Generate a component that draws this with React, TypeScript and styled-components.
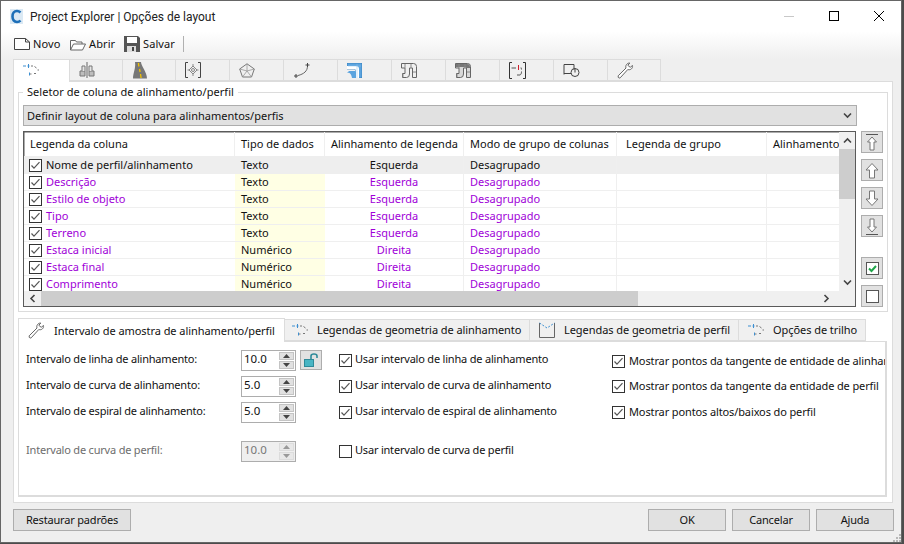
import React from "react";
import styled, { createGlobalStyle } from "styled-components";

const FONT = `"Noto Sans", Tahoma, sans-serif`;

const Global = createGlobalStyle`
  html, body { margin: 0; padding: 0; background: #4c4c4c; }
  body { width: 904px; height: 544px; overflow: hidden; font-family: ${FONT}; }
  * { box-sizing: border-box; }
`;

const Win = styled.div`
  width: 902px; height: 543px; border: 1px solid #666;
  background: #efefef; display: flex; flex-direction: column; color: #111;
  font-size: 11px; line-height: 14px; position: relative;
`;
const TitleBar = styled.div`
  height: 30px; background: #fff; display: flex; align-items: center; padding-left: 9px; flex: none;
`;
const TitleText = styled.span`
  margin-left: 7px; font-family: Roboto, sans-serif; font-size: 12px; color: #222; flex: 1; padding-top: 1px;
`;
const WinBtn = styled.div`
  width: 45px; height: 30px; display: flex; align-items: center; justify-content: center; flex: none;
`;
const WinBtns = styled.div`display: flex;`;
const Toolbar = styled.div`
  height: 28px; flex: none; display: flex; align-items: center; padding: 0 0 2px 13px;
  background: linear-gradient(#fff, #efefef);
`;
const ToolBtn = styled.div<{ $w: number }>`
  width: ${p => p.$w}px; display: flex; align-items: center; gap: 3px; font-size: 11px; letter-spacing: .1px;
`;
const ToolSep = styled.div`width: 1px; height: 16px; background: #b0b0b0;`;
const TabStrip = styled.div`
  display: flex; height: 22px; margin: 0 0 0 12px; align-items: flex-end; flex: none; position: relative; z-index: 1;
`;
const IconTab = styled.div<{ $w: number; $active?: boolean }>`
  width: ${p => p.$w}px; height: ${p => (p.$active ? 23 : 22)}px;
  background: ${p => (p.$active ? "#fff" : "#f0f0f0")};
  border: 1px solid #dcdcdc; border-left-width: ${p => (p.$active ? 1 : 0)}px;
  border-bottom-width: ${p => (p.$active ? 0 : 1)}px;
  margin-bottom: ${p => (p.$active ? -1 : 0)}px;
  display: flex; align-items: center; padding-left: 9px; padding-bottom: ${p => (p.$active ? 3 : 0)}px;
`;
const Outer = styled.div`
  width: 880px; height: 422px; margin-left: 12px; background: #fff; border: 1px solid #dcdcdc;
  padding: 10px 4px 5px 4px; display: flex; flex-direction: column; flex: none;
`;
const Group = styled.div`
  width: 870px; height: 220px; border: 1px solid #dcdcdc; position: relative; padding: 12px 4px 0 4px; flex: none;
`;
const Legend = styled.div`
  position: absolute; left: 4px; top: -8px; background: #fff; padding: 0 4px; letter-spacing: .05px;
`;
const Combo = styled.div`
  height: 21px; width: 834px; background: #e1e1e1; border: 1px solid #adadad; display: flex; align-items: center;
  justify-content: space-between; padding: 0 4px 0 3px;
`;
const TableRow = styled.div`display: flex; margin-top: 5px; align-items: flex-start;`;
const TableBox = styled.div`
  width: 834px; height: 176px; border: 1px solid #5a5a5a; display: flex; flex-direction: column; overflow: hidden;
  box-shadow: inset 0 0 0 .5px #5a5a5a;
`;
const TableTop = styled.div`flex: 1; display: flex; min-height: 0;`;
const Cols = styled.div`flex: 1; min-width: 0; overflow: hidden;`;
const GRID = "211px 90px 139px 153px 150px 90px";
const Head = styled.div`
  display: grid; grid-template-columns: ${GRID}; height: 24px; width: 833px;
`;
const HeadCell = styled.div<{ $pl?: number }>`
  border-right: 1px solid #efefef; padding: 0 0 0 ${p => p.$pl ?? 6}px; display: flex; align-items: center; white-space: nowrap; overflow: hidden;
`;
const Row = styled.div<{ $sel?: boolean }>`
  display: grid; grid-template-columns: ${GRID}; height: ${p => (p.$sel ? 18 : 17)}px; width: 833px;
  background: ${p => (p.$sel ? "#eeeeee" : "#fff")};
  border-bottom: ${p => (p.$sel ? "0" : "1px solid #efefef")};
  color: ${p => (p.$sel ? "#111" : "#a000d8")};
`;
const NameCell = styled.div`display: flex; align-items: center; padding-left: 5px; gap: 4px; white-space: nowrap;`;
const DataCell = styled.div<{ $yellow?: boolean; $center?: boolean; $sel?: boolean }>`
  display: flex; align-items: center; padding-left: 6px; color: #111; white-space: nowrap;
  justify-content: ${p => (p.$center ? "center" : "flex-start")};
  background: ${p => (p.$sel ? "#eee" : p.$yellow ? "#ffffe4" : "transparent")};
`;
const PurpleCell = styled(DataCell)<{ $on?: boolean }>`
  color: ${p => (p.$on ? "#111" : "#a000d8")}; border-right: 1px solid #efefef; padding-left: ${p => (p.$center ? 0 : 6)}px;
`;
const VScroll = styled.div`
  width: 16px; flex: none; background: #f0f0f0; display: flex; flex-direction: column; align-items: stretch;
`;
const ScrollArrow = styled.div`
  height: 17px; flex: none; display: flex; align-items: center; justify-content: center;
`;
const VTrack = styled.div`flex: 1;`;
const VThumb = styled.div`height: 50px; background: #cdcdcd;`;
const HScroll = styled.div`height: 15px; flex: none; display: flex; background: #f0f0f0;`;
const HArrow = styled.div<{ $mr?: number }>`width: 17px; flex: none; display: flex; align-items: center; justify-content: center; margin-right: ${p => p.$mr ?? 0}px;`;
const HThumb = styled.div`width: 597px; background: #cdcdcd; flex: none;`;
const HFill = styled.div`flex: 1;`;
const SideBtns = styled.div`margin-left: 5px; display: flex; flex-direction: column; width: 22px; flex: none;`;
const SideBtn = styled.div<{ $mt: number }>`
  width: 22px; height: 22px; margin-top: ${p => p.$mt}px; background: #e1e1e1; border: 1px solid #adadad;
  display: flex; align-items: center; justify-content: center; flex: none;
`;
const SubTabs = styled.div`
  display: flex; height: 24px; margin-top: 5px; align-items: flex-end; position: relative; z-index: 1; flex: none; letter-spacing: -.06px; font-size: 11px;
`;
const SubTab = styled.div<{ $w: number; $active?: boolean; $pl?: number }>`
  width: ${p => p.$w}px; height: ${p => (p.$active ? 24 : 22)}px;
  background: ${p => (p.$active ? "#fff" : "#f0f0f0")};
  border: 1px solid #dcdcdc; border-left-width: ${p => (p.$active ? 1 : 0)}px; border-bottom-width: ${p => (p.$active ? 0 : 1)}px;
  margin-bottom: ${p => (p.$active ? -1 : 0)}px;
  display: flex; align-items: center; white-space: nowrap; padding-left: ${p => p.$pl ?? 5}px; gap: 8px;
`;
const SubLabel = styled.span<{ $ml?: number }>`margin-left: ${p => p.$ml ?? 0}px;`;
const SubPanel = styled.div`
  width: 869px; height: 156px; border: 2px solid #dcdcdc; border-width: 1px 2px 2px 1px; position: relative; flex: none;
  display: grid; grid-template-columns: 313px 273px 1fr; overflow: hidden; padding: 8px 0 0 7px;
`;
const Col = styled.div<{ $pt?: number }>`display: flex; flex-direction: column; padding-top: ${p => p.$pt ?? 0}px; min-width: 0;`;
const FieldRow = styled.div<{ $mt?: number }>`
  display: flex; height: 20px; align-items: center; margin-top: ${p => p.$mt ?? 0}px; flex: none;
`;
const Label = styled.div<{ $off?: boolean }>`
  width: 215px; color: ${p => (p.$off ? "#6d6d6d" : "#111")}; white-space: nowrap; letter-spacing: -.2px; padding-bottom: 2px;
`;
const Spin = styled.div<{ $off?: boolean }>`
  width: 55px; height: 21px; border: 1px solid #adadad; background: ${p => (p.$off ? "#efefef" : "#fff")};
  display: flex; justify-content: space-between; padding: 1px; flex: none; color: ${p => (p.$off ? "#777" : "#111")};
`;
const SpinVal = styled.div`padding-left: 1px; font-size: 11.5px; line-height: 14px;`;
const SpinBtns = styled.div`display: flex; flex-direction: column; gap: 1px; width: 15px;`;
const SpinBtn = styled.div<{ $off?: boolean }>`
  flex: 1; background: ${p => (p.$off ? "#e8e8e8" : "#e1e1e1")}; display: flex; align-items: center; justify-content: center;
  border: 1px solid ${p => (p.$off ? "#dcdcdc" : "#c4c4c4")};
`;
const LockBtn = styled.div`
  width: 22px; height: 20px; margin-left: 4px; background: #e1e1e1; border: 1px solid #adadad;
  display: flex; align-items: center; justify-content: center;
`;
const CheckLine = styled.div<{ $mt?: number; $gap?: number; $ls?: number }>`
  display: flex; height: 20px; align-items: center; gap: ${p => p.$gap ?? 3}px; white-space: nowrap; margin-top: ${p => p.$mt ?? 0}px; flex: none; letter-spacing: ${p => p.$ls ?? -0.2}px;
`;
const CheckText = styled.span<{ $raise?: boolean }>`padding-bottom: ${p => (p.$raise ? 2 : 0)}px;`;
const Footer = styled.div`
  display: flex; margin: 6px 0 0 12px; width: 881px; justify-content: space-between; flex: none; letter-spacing: -.18px;
`;
const FootBtn = styled.div<{ $w: number }>`
  width: ${p => p.$w}px; height: 22px; background: #e1e1e1; border: 1px solid #adadad;
  display: flex; align-items: center; justify-content: center;
`;
const FootRight = styled.div`display: flex; gap: 6px;`;
const Grip = styled.svg`position: absolute; right: 0; bottom: 0;`;

const Check = ({ on = true }: { on?: boolean }) => (
  <svg width="13" height="13" viewBox="0 0 13 13" style={{ flex: "none" }}>
    <rect x=".5" y=".5" width="12" height="12" fill="#fff" stroke="#333" />
    {on && <path d="M2.5 6.5 5 9.2 10.5 3.2" fill="none" stroke="#555" strokeWidth="1.2" />}
  </svg>
);

const DashCurve = () => (
  <svg width="16" height="14" viewBox="0 0 16 14">
    <path d="M0 3h3M4.500 3h2" stroke="#3d8fd1" />
    <path d="M5.500 1v4" stroke="#3d8fd1" />
    <path d="M8 3h2M11.500 3.500l2 1.500M14.500 7H16M13 10.500h-2M8.500 11H6" stroke="#777" fill="none" />
    <path d="M6.500 9.500v3" stroke="#3d8fd1" />
  </svg>
);

const Ic = {
  road2: (
    <svg width="16" height="16" viewBox="0 0 16 16">
      <path d="M8 0v16" stroke="#666" />
      <path d="M1 9h5v5H1zM10 9h5v5h-5z" fill="#bdbdbd" stroke="#777" />
      <path d="M3 9V4h3v5M13 9V4h-3v5" fill="#e6e6e6" stroke="#777" />
    </svg>
  ),
  road: (
    <svg width="16" height="17" viewBox="0 0 16 17">
      <path d="M3 0h6c0 4 6 10 6 16.500H1C1 11 4 6 3 0z" fill="#777" />
      <path d="M6.500 1c0 1 0 2 .5 3.500M7.500 7l.6 3M8.500 12l.6 4" stroke="#f2c200" strokeWidth="1.300" fill="none" />
    </svg>
  ),
  target: (
    <svg width="16" height="16" viewBox="0 0 16 16">
      <path d="M3 .5H.5v15H3M13 .5h2.500v15H13" fill="none" stroke="#444" />
      <path d="M8 4l4 4-4 4-4-4z" fill="none" stroke="#888" />
      <circle cx="8" cy="8" r="1.500" fill="none" stroke="#888" />
      <path d="M8 2v2M8 12v2M2.500 8H4M12 8h1.500" stroke="#888" />
    </svg>
  ),
  surface: (
    <svg width="16" height="15" viewBox="0 0 16 15">
      <path d="M8 .8 15.300 6l-2.800 8h-9L.7 6z" fill="none" stroke="#777" />
      <path d="M.7 6 8 8l7.300-2M8 .8V8M3.500 14 8 8l4.500 6" fill="none" stroke="#999" strokeWidth=".8" />
    </svg>
  ),
  curve: (
    <svg width="17" height="17" viewBox="0 0 17 17">
      <path d="M14.500 4C14.500 9 11 12 5 13.500" fill="none" stroke="#666" />
      <path d="M12.500 3h4M14.500 1v4M1 14h4M3 12v4" stroke="#444" />
    </svg>
  ),
  blue: (
    <svg width="15" height="15" viewBox="0 0 15 15">
      <path d="M0 0h15v15H9V8q0-2-2-2H0z" fill="#5ba4df" stroke="#2f78b5" strokeWidth=".7" />
      <path d="M0 3h9q3 0 3 3v9H9V8q0-2-2-2H0z" fill="#fff" />
      <path d="M0 10q4-1 5 5h4V9q0-1-1-1H2z" fill="#5ba4df" />
      <path d="M10 1v14M1 3h13" stroke="#8ec3ea" strokeWidth=".5" />
    </svg>
  ),
  pipe: (g: boolean) => (
    <svg width="16" height="15" viewBox="0 0 16 15">
      <path d="M.5 .5h12q3 0 3 3v11h-4V5h-3v6q0 3.500-3 3.500H1.500v-4h2.500V5H.5z" fill={g ? "#d8d8d8" : "#efefef"} stroke="#666" />
      {g && <path d="M1 1h11q3 0 3 3v1h-4V4H1z" fill="#777" />}
      <path d="M4 1v4M10 1v4M12 9h3M2 11v3" stroke="#888" />
    </svg>
  ),
  bracket: (
    <svg width="17" height="17" viewBox="0 0 17 17">
      <path d="M3 .5H.5v16H3M14 .5h2.500v16H14" fill="none" stroke="#333" />
      <path d="M2.500 6H7M12 5.500l.5 2M12.500 9.500c0 2-.5 3-1.500 3.500H8" fill="none" stroke="#555" />
      <path d="M9.500 3v5" stroke="#d01c2a" />
    </svg>
  ),
  profile: (
    <svg width="17" height="13" viewBox="0 0 17 13">
      <path d="M1 10.500V.5h10v5" fill="none" stroke="#444" />
      <path d="M1 9.500h7" stroke="#444" />
      <circle cx="12" cy="8.500" r="4" fill="none" stroke="#444" />
      <path d="M12 4.500v4" stroke="#444" />
    </svg>
  ),
  wrench: (
    <svg width="17" height="17" viewBox="0 0 17 17">
      <path d="M1.200 13.800 9 6c-.8-2.300.7-5 3.800-5l-2 2.300 2.400 2L15.500 3.500c.5 2.800-2 5-4.700 4L3.200 15.800q-1.200.8-2-.5z" fill="#fff" stroke="#666" />
    </svg>
  ),
};

const Arrow = ({ d }: { d: "up" | "down" }) => (
  <svg width="14" height="17" viewBox="0 0 14 17">
    {d === "up" ? (
      <path d="M7 1.500 13 8H9.500v8h-5V8H1z" fill="#fff" stroke="#777" />
    ) : (
      <path d="M7 15.500 13 9H9.500V1h-5v8H1z" fill="#fff" stroke="#777" />
    )}
  </svg>
);
const EndArrow = ({ d }: { d: "up" | "down" }) => (
  <svg width="14" height="17" viewBox="0 0 14 17">
    {d === "up" ? (
      <>
        <path d="M1 .5h12" stroke="#555" />
        <path d="M7 3 11.500 8H9v8H5V8H2.500z" fill="#fff" stroke="#777" />
      </>
    ) : (
      <>
        <path d="M1 16.500h12" stroke="#555" />
        <path d="M7 14 11.500 9H9V1H5v8H2.500z" fill="#fff" stroke="#777" />
      </>
    )}
  </svg>
);

const Tri = ({ up, c = "#444" }: { up?: boolean; c?: string }) => (
  <svg width="7" height="4" viewBox="0 0 7 4">
    <path d={up ? "M3.500 0 7 4H0z" : "M0 0h7L3.500 4z"} fill={c} />
  </svg>
);

const Chev = ({ r }: { r: number }) => (
  <svg width="9" height="7" viewBox="0 0 9 7" style={{ transform: `rotate(${r}deg)` }}>
    <path d="M1 5.500 4.500 2 8 5.500" fill="none" stroke="#444" strokeWidth="1.600" />
  </svg>
);

const SpinBox = ({ v, off }: { v: string; off?: boolean }) => (
  <Spin $off={off}>
    <SpinVal>{v}</SpinVal>
    <SpinBtns>
      <SpinBtn $off={off}><Tri up c={off ? "#999" : "#444"} /></SpinBtn>
      <SpinBtn $off={off}><Tri c={off ? "#999" : "#444"} /></SpinBtn>
    </SpinBtns>
  </Spin>
);

const rows: [string, string, string][] = [
  ["Descrição", "Texto", "Esquerda"],
  ["Estilo de objeto", "Texto", "Esquerda"],
  ["Tipo", "Texto", "Esquerda"],
  ["Terreno", "Texto", "Esquerda"],
  ["Estaca inicial", "Numérico", "Direita"],
  ["Estaca final", "Numérico", "Direita"],
  ["Comprimento", "Numérico", "Direita"],
];

const iconTabs: [React.ReactNode, number][] = [
  [Ic.road2, 52.5], [Ic.road, 53.5], [Ic.target, 54], [Ic.surface, 54], [Ic.curve, 54], [Ic.blue, 54],
  [Ic.pipe(false), 54], [Ic.pipe(true), 54], [Ic.bracket, 54], [Ic.profile, 54], [Ic.wrench, 53],
];

export default function App() {
  return (
    <>
      <Global />
      <Win>
        <TitleBar>
          <svg width="13" height="15" viewBox="0 0 13 15">
            <rect width="13" height="15" fill="#dbe9f4" />
            <path d="M10.500 3.500C9.500 2.500 8.500 2 7 2 4 2 2.500 4.500 2.500 7.500S4 13 7 13c1.500 0 2.700-.6 3.500-1.500" fill="none" stroke="#1d6fb8" strokeWidth="2.600" />
          </svg>
          <TitleText>Project Explorer | Opções de layout</TitleText>
          <WinBtns>
            <WinBtn><svg width="10" height="1"><rect width="10" height="1" fill="#c8c8c8" /></svg></WinBtn>
            <WinBtn><svg width="10" height="10"><rect x=".5" y=".5" width="9" height="9" fill="none" stroke="#000" /></svg></WinBtn>
            <WinBtn><svg width="10" height="10"><path d="M0 0 10 10M10 0 0 10" stroke="#000" /></svg></WinBtn>
          </WinBtns>
        </TitleBar>
        <Toolbar>
          <ToolBtn $w={56}>
            <svg width="16" height="12" viewBox="0 0 16 12"><path d="M.5.5h11l4 3.500v7.500H.500zM11.500.5V4h4" fill="#fff" stroke="#444" /></svg>
            Novo
          </ToolBtn>
          <ToolBtn $w={54}>
            <svg width="16" height="13" viewBox="0 0 16 13"><path d="M.5 12V2.500h5l1 1.500H12v2M.5 12l3-6h12l-3 6z" fill="#fff" stroke="#666" /></svg>
            Abrir
          </ToolBtn>
          <ToolBtn $w={59}>
            <svg width="16" height="16" viewBox="0 0 16 16"><path d="M0 0h14l2 2v14H0z" fill="#555" /><rect x="3" y="1" width="10" height="6" fill="#fff" /><rect x="3" y="10" width="9" height="6" fill="#ddd" /><rect x="8" y="11" width="2" height="4" fill="#444" /></svg>
            Salvar
          </ToolBtn>
          <ToolSep />
        </Toolbar>
        <TabStrip>
          <IconTab $w={57} $active><DashCurve /></IconTab>
          {iconTabs.map(([ic, w], i) => (
            <IconTab key={i} $w={w}>{ic}</IconTab>
          ))}
        </TabStrip>
        <Outer>
          <Group>
            <Legend>Seletor de coluna de alinhamento/perfil</Legend>
            <Combo>
              Definir layout de coluna para alinhamentos/perfis
              <Chev r={180} />
            </Combo>
            <TableRow>
              <TableBox>
                <TableTop>
                  <Cols>
                    <Head>
                      <HeadCell>Legenda da coluna</HeadCell>
                      <HeadCell>Tipo de dados</HeadCell>
                      <HeadCell>Alinhamento de legenda</HeadCell>
                      <HeadCell>Modo de grupo de colunas</HeadCell>
                      <HeadCell $pl={9}>Legenda de grupo</HeadCell>
                      <HeadCell>Alinhamento</HeadCell>
                    </Head>
                    <Row $sel>
                      <NameCell><Check />Nome de perfil/alinhamento</NameCell>
                      <DataCell $sel>Texto</DataCell>
                      <PurpleCell $center $on $sel>Esquerda</PurpleCell>
                      <PurpleCell $on $sel>Desagrupado</PurpleCell>
                      <DataCell $sel />
                      <DataCell $sel />
                    </Row>
                    {rows.map(r => (
                      <Row key={r[0]}>
                        <NameCell><Check />{r[0]}</NameCell>
                        <DataCell $yellow>{r[1]}</DataCell>
                        <PurpleCell $center>{r[2]}</PurpleCell>
                        <PurpleCell>Desagrupado</PurpleCell>
                        <PurpleCell />
                        <DataCell />
                      </Row>
                    ))}
                  </Cols>
                  <VScroll>
                    <ScrollArrow><Chev r={0} /></ScrollArrow>
                    <VThumb />
                    <VTrack />
                    <ScrollArrow><Chev r={180} /></ScrollArrow>
                  </VScroll>
                </TableTop>
                <HScroll>
                  <HArrow><Chev r={-90} /></HArrow>
                  <HThumb />
                  <HFill />
                  <HArrow $mr={20}><Chev r={90} /></HArrow>
                </HScroll>
              </TableBox>
              <SideBtns>
                <SideBtn $mt={0}><EndArrow d="up" /></SideBtn>
                <SideBtn $mt={6}><Arrow d="up" /></SideBtn>
                <SideBtn $mt={6}><Arrow d="down" /></SideBtn>
                <SideBtn $mt={6}><EndArrow d="down" /></SideBtn>
                <SideBtn $mt={20}>
                  <svg width="13" height="13" viewBox="0 0 13 13"><rect x=".5" y=".5" width="12" height="12" fill="#fff" stroke="#555" /><path d="M3 6.500 5.500 9 10 4" fill="none" stroke="#1fa64a" strokeWidth="2" /></svg>
                </SideBtn>
                <SideBtn $mt={6}>
                  <svg width="13" height="13" viewBox="0 0 13 13"><rect x=".5" y=".5" width="12" height="12" fill="#fff" stroke="#555" /></svg>
                </SideBtn>
              </SideBtns>
            </TableRow>
          </Group>
          <SubTabs>
            <SubTab $w={267} $active $pl={9}>{Ic.wrench}<SubLabel $ml={1}>Intervalo de amostra de alinhamento/perfil</SubLabel></SubTab>
            <SubTab $w={245} $pl={7}><DashCurve /><SubLabel $ml={1}>Legendas de geometria de alinhamento</SubLabel></SubTab>
            <SubTab $w={209} $pl={9}>
              <svg width="16" height="16" viewBox="0 0 16 16"><path d="M.5 1v14.500h15V1" fill="none" stroke="#666" /><path d="M.5 1 8 6l7.500-5" fill="none" stroke="#3d8fd1" strokeDasharray="2 1.500" /></svg>
              <SubLabel $ml={1}>Legendas de geometria de perfil</SubLabel>
            </SubTab>
            <SubTab $w={127} $pl={9}><DashCurve /><SubLabel $ml={1}>Opções de trilho</SubLabel></SubTab>
          </SubTabs>
          <SubPanel>
            <Col>
              <FieldRow>
                <Label>Intervalo de linha de alinhamento:</Label>
                <SpinBox v="10.0" />
                <LockBtn>
                  <svg width="14" height="14" viewBox="0 0 14 14"><rect x="0.500" y="6.500" width="9" height="7" fill="#49b5c4" stroke="#2e8a99" /><path d="M7 6V3q0-2 3-2t3 2v2" fill="none" stroke="#2e8a99" strokeWidth="1.600" /></svg>
                </LockBtn>
              </FieldRow>
              <FieldRow $mt={6}><Label>Intervalo de curva de alinhamento:</Label><SpinBox v="5.0" /></FieldRow>
              <FieldRow $mt={6}><Label>Intervalo de espiral de alinhamento:</Label><SpinBox v="5.0" /></FieldRow>
              <FieldRow $mt={19}><Label $off>Intervalo de curva de perfil:</Label><SpinBox v="10.0" off /></FieldRow>
            </Col>
            <Col>
              <CheckLine><Check /><CheckText $raise>Usar intervalo de linha de alinhamento</CheckText></CheckLine>
              <CheckLine $mt={6}><Check /><CheckText $raise>Usar intervalo de curva de alinhamento</CheckText></CheckLine>
              <CheckLine $mt={6}><Check /><CheckText $raise>Usar intervalo de espiral de alinhamento</CheckText></CheckLine>
              <CheckLine $mt={19}><Check on={false} /><CheckText $raise>Usar intervalo de curva de perfil</CheckText></CheckLine>
            </Col>
            <Col $pt={1}>
              <CheckLine $gap={4} $ls={-0.12}><Check /><CheckText>Mostrar pontos da tangente de entidade de alinhamento</CheckText></CheckLine>
              <CheckLine $gap={4} $ls={-0.12} $mt={5}><Check /><CheckText>Mostrar pontos da tangente da entidade de perfil</CheckText></CheckLine>
              <CheckLine $gap={4} $ls={-0.12} $mt={6}><Check /><CheckText>Mostrar pontos altos/baixos do perfil</CheckText></CheckLine>
            </Col>
          </SubPanel>
        </Outer>
        <Footer>
          <FootBtn $w={118}>Restaurar padrões</FootBtn>
          <FootRight>
            <FootBtn $w={78}>OK</FootBtn>
            <FootBtn $w={78}>Cancelar</FootBtn>
            <FootBtn $w={78}>Ajuda</FootBtn>
          </FootRight>
        </Footer>
        <Grip width="10" height="10" viewBox="0 0 10 10">
          <path d="M8 2h2v2H8zM5 5h2v2H5zM8 5h2v2H8zM2 8h2v2H2zM5 8h2v2H5zM8 8h2v2H8z" fill="#b8b8b8" />
        </Grip>
      </Win>
    </>
  );
}
